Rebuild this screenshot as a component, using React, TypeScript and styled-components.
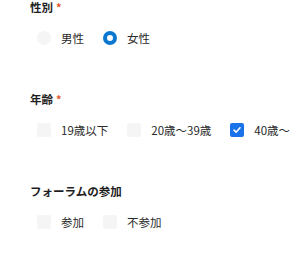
import React, { useState } from 'react';
import styled, { createGlobalStyle } from 'styled-components';

const GlobalStyle = createGlobalStyle`
  body {
    margin: 0;
    background: #ffffff;
    font-family: "Noto Sans CJK JP", "Noto Sans", sans-serif;
    color: #222222;
  }
`;

interface IOption {
  value: string;
  label: string;
}

const genderOptions: IOption[] = [
  { value: 'male', label: '男性' },
  { value: 'female', label: '女性' },
];

const ageOptions: IOption[] = [
  { value: 'under19', label: '19歳以下' },
  { value: '20to39', label: '20歳〜39歳' },
  { value: 'over40', label: '40歳〜' },
];

const forumOptions: IOption[] = [
  { value: 'join', label: '参加' },
  { value: 'notJoin', label: '不参加' },
];

const Form = styled.div`
  padding: 1px 0 0 30px;
  display: flex;
  flex-direction: column;
  gap: 45px;
`;

const Section = styled.div`
  display: flex;
  flex-direction: column;
  gap: 15px;
`;

const Heading = styled.div`
  font-size: 11.5px;
  font-weight: 700;
  line-height: 12px;
  height: 12px;
  color: #1e1e1e;
`;

const Required = styled.span`
  color: #e2592b;
  margin-left: 3px;
  font-size: 11px;
`;

const Options = styled.div`
  display: flex;
  align-items: center;
  gap: 19px;
  padding-left: 7px;
  height: 20px;
`;

const Option = styled.label`
  display: flex;
  align-items: center;
  gap: 10px;
  font-size: 11.5px;
  line-height: 20px;
  color: #2a2a2a;
  cursor: pointer;
`;

const RadioMark = styled.span<{ $checked: boolean }>`
  box-sizing: border-box;
  width: 14px;
  height: 14px;
  border-radius: 50%;
  background: ${({ $checked }) => ($checked ? '#ffffff' : '#f5f5f5')};
  border: ${({ $checked }) => ($checked ? '4px solid #0b78d0' : 'none')};
`;

const CheckMark = styled.span<{ $checked: boolean }>`
  box-sizing: border-box;
  width: 14px;
  height: 14px;
  border-radius: 2px;
  background: ${({ $checked }) => ($checked ? '#1a73e8' : '#f5f5f5')};
  display: flex;
  align-items: center;
  justify-content: center;
`;

const Tick = () => (
  <svg width="10" height="10" viewBox="0 0 10 10">
    <path d="M2 5.2 L4.1 7.2 L8 2.8" fill="none" stroke="#ffffff" strokeWidth="1.6" strokeLinecap="round" strokeLinejoin="round" />
  </svg>
);

const App: React.FC = () => {
  const [gender, setGender] = useState('female');
  const [ages, setAges] = useState<string[]>(['over40']);
  const [forum, setForum] = useState<string[]>([]);

  const toggle = (list: string[], value: string) => (
    list.includes(value) ? list.filter((v) => v !== value) : [...list, value]
  );

  return (
    <>
      <GlobalStyle />
      <Form>
        <Section>
          <Heading>
            性別
            <Required>*</Required>
          </Heading>
          <Options>
            {genderOptions.map(({ value, label }) => (
              <Option key={value} onClick={() => setGender(value)}>
                <RadioMark $checked={gender === value} />
                {label}
              </Option>
            ))}
          </Options>
        </Section>

        <Section>
          <Heading>
            年齢
            <Required>*</Required>
          </Heading>
          <Options>
            {ageOptions.map(({ value, label }) => (
              <Option key={value} onClick={() => setAges(toggle(ages, value))}>
                <CheckMark $checked={ages.includes(value)}>
                  {ages.includes(value) && <Tick />}
                </CheckMark>
                {label}
              </Option>
            ))}
          </Options>
        </Section>

        <Section>
          <Heading>フォーラムの参加</Heading>
          <Options>
            {forumOptions.map(({ value, label }) => (
              <Option key={value} onClick={() => setForum(toggle(forum, value))}>
                <CheckMark $checked={forum.includes(value)}>
                  {forum.includes(value) && <Tick />}
                </CheckMark>
                {label}
              </Option>
            ))}
          </Options>
        </Section>
      </Form>
    </>
  );
};

export default App;
